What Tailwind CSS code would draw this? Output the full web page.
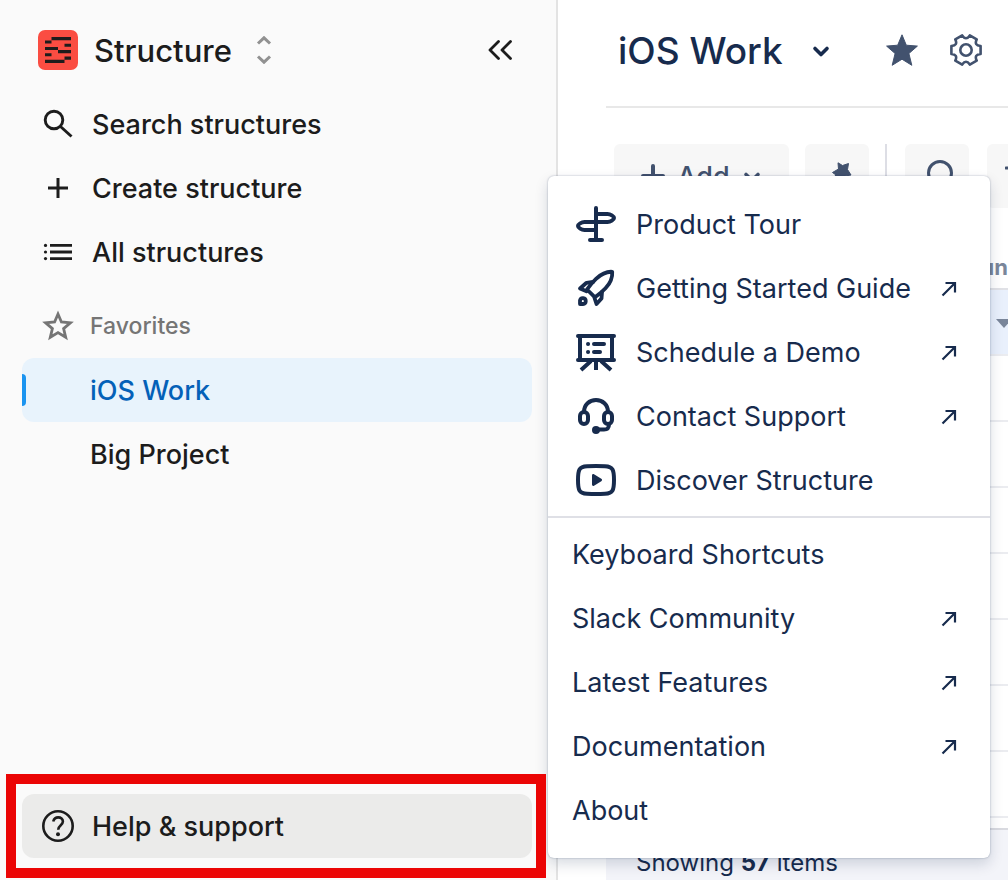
<!DOCTYPE html>
<html lang="en">
<head>
<meta charset="utf-8">
<meta name="viewport" content="width=device-width, initial-scale=1">
<title>Structure</title>
<script src="https://cdn.jsdelivr.net/npm/@tailwindcss/browser@4"></script>
</head>
<body class="relative flex h-screen overflow-hidden bg-white font-['Inter','Liberation_Sans',sans-serif] text-[27px] leading-[33px] text-[#172b4d]">

<!-- Sidebar -->
<aside class="flex w-[558px] shrink-0 flex-col border-r-2 border-[#e3e3e3] bg-[#fafafa] pr-6 pb-[22px] pl-[22px] font-medium text-[#1c1c1c]">
  <header class="flex h-[92px] items-center px-4 pt-2">
    <svg class="size-10 shrink-0" viewBox="0 0 40 40" aria-hidden="true">
      <rect width="40" height="40" rx="7" fill="#fa4d42"/>
      <path fill="#1f1c1c" d="M13.500 7h19.500v3.200H13.500zM7 10.500h6.500v3H7zM26.500 13.700H33v3h-6.500zM7 17h13v3H7zM20 20h13v3.200H20zM7 23.200h6.500v3H7zM26.500 26.400H33v3.300h-6.500zM7 29.700h19.500V33H7z"/>
    </svg>
    <button type="button" class="ml-4 flex items-center gap-6 text-[31px] leading-[41px]">
      Structure
      <svg class="h-7 w-4" viewBox="0 0 16 28" fill="none" stroke="#919191" stroke-width="3" aria-hidden="true"><path d="M2 7.500 8 1.800l6 5.700M2 20.500l6 5.700 6-5.700"/></svg>
    </button>
    <button type="button" aria-label="Collapse sidebar" class="ml-auto mr-[2px]">
      <svg class="h-6 w-7" viewBox="0 0 28 24" fill="none" stroke="#1c1c1c" stroke-width="2.800" stroke-linecap="round" stroke-linejoin="round" aria-hidden="true"><path d="M12.500 3.500 4 12l8.500 8.500M24.500 3.500 16 12l8.500 8.500"/></svg>
    </button>
  </header>

  <nav aria-label="Structures" class="flex flex-col">
    <a href="#search" class="flex h-16 items-center gap-[18px] rounded-xl px-5">
      <svg class="size-8" viewBox="0 0 32 32" fill="none" stroke="#1c1c1c" stroke-width="2.900" aria-hidden="true"><circle cx="12" cy="12" r="8.800"/><path d="M18.500 18.500 29.500 28.500"/></svg>
      Search structures
    </a>
    <a href="#create" class="flex h-16 items-center gap-[18px] rounded-xl px-5">
      <svg class="size-8" viewBox="0 0 32 32" fill="none" stroke="#1c1c1c" stroke-width="3" aria-hidden="true"><path d="M16 6v20M6 16h20"/></svg>
      Create structure
    </a>
    <a href="#all" class="flex h-16 items-center gap-[18px] rounded-xl px-5">
      <svg class="size-8" viewBox="0 0 32 32" fill="#1c1c1c" aria-hidden="true"><path d="M8 8h22v2.800H8zM8 14.600h22v2.800H8zM8 21.200h22V24H8z"/><circle cx="3.500" cy="9.400" r="1.600"/><circle cx="3.500" cy="16" r="1.600"/><circle cx="3.500" cy="22.600" r="1.600"/></svg>
      All structures
    </a>
    <h2 class="mt-[10px] flex h-16 items-center gap-4 px-5 text-[23px] text-[#757575]">
      <svg class="size-8" viewBox="0 0 32 32" fill="none" stroke="#757575" stroke-width="2.800" aria-hidden="true"><path d="m16 4 3.400 8 9 .8-6.800 5.800 2.100 8.700L16 22.600l-7.700 4.700 2.100-8.700-6.800-5.800 9-.8z"/></svg>
      Favorites
    </h2>
    <a href="#ios" aria-current="page" class="flex h-16 items-center rounded-xl bg-[#e8f3fc] text-[#0461b8]">
      <span class="mr-16 h-8 w-1 rounded-r bg-[#1a94f0]"></span>iOS Work
    </a>
    <a href="#big" class="flex h-16 items-center rounded-xl px-[68px]">Big Project</a>
  </nav>

  <button type="button" aria-expanded="true" class="mt-auto flex h-16 items-center gap-[18px] rounded-xl bg-[#ebebea] px-5">
    <svg class="size-8" viewBox="0 0 32 32" fill="none" stroke="#1c1c1c" stroke-width="2.600" aria-hidden="true"><circle cx="16" cy="16" r="14.700"/><path d="M11.200 11.500C12 8.800 13.800 7.400 16.200 7.400c2.700 0 4.700 1.700 4.700 4.200 0 3.600-4.700 3.700-4.700 8.200"/><circle cx="16" cy="24.300" r="2" fill="#1c1c1c" stroke="none"/></svg>
    Help &amp; support
  </button>
</aside>

<!-- Structure view -->
<main class="flex min-w-0 flex-1 flex-col pl-12">
  <header class="flex h-[108px] shrink-0 items-center border-b-2 border-[#e8e8e8] pr-6 pb-1.5 pl-3">
    <h1 class="text-[37px] leading-[49px] font-medium">iOS Work</h1>
    <button type="button" aria-label="Switch structure" class="ml-7">
      <svg class="h-5 w-5" viewBox="0 0 20 20" fill="none" stroke="#172b4d" stroke-width="3.600" stroke-linecap="round" stroke-linejoin="round" aria-hidden="true"><path d="m4 8.500 6 6 6-6"/></svg>
    </button>
    <button type="button" aria-label="Favorite" class="ml-auto">
      <svg class="size-8" viewBox="0 0 32 32" fill="#42526e" stroke="#42526e" stroke-width="1" stroke-linejoin="round" aria-hidden="true"><path d="m16 .8 4.300 10.400 11.100.9-8.500 7.400 2.900 11.800L16 25.200l-9.800 6.100 2.900-11.800L.6 12.100l11.100-.9z"/></svg>
    </button>
    <button type="button" aria-label="Settings" class="ml-8 mr-[2px]">
      <svg class="size-8" viewBox="0 0 32 32" fill="none" stroke="#42526e" stroke-width="2.600" stroke-linejoin="round" aria-hidden="true"><circle cx="16" cy="16" r="5.700"/><path d="M30.600 12v8Q23.800 20.500 26.700 26.600L19.800 30.600Q16 25 12.200 30.600L5.300 26.600Q8.200 20.500 1.400 20v-8Q8.200 11.500 5.300 5.400L12.200 1.400Q16 7 19.800 1.400L26.700 5.400Q23.800 11.500 30.600 12z"/></svg>
    </button>
  </header>

  <div class="mt-9 flex h-16 shrink-0 overflow-hidden pl-2 text-[#42526e]">
    <button type="button" class="flex w-[175px] shrink-0 items-center justify-center gap-3 rounded-md bg-[#f7f7f7] font-medium">
      <svg class="size-6" viewBox="0 0 24 24" fill="none" stroke="#42526e" stroke-width="4" stroke-linecap="round" aria-hidden="true"><path d="M12 2v20M2 12h20"/></svg>
      Add
      <svg class="size-5" viewBox="0 0 20 20" fill="none" stroke="#42526e" stroke-width="3.600" stroke-linecap="round" aria-hidden="true"><path d="m4 8.500 6 6 6-6"/></svg>
    </button>
    <button type="button" aria-label="Automation" class="ml-4 flex w-16 shrink-0 items-center justify-center rounded-md bg-[#f7f7f7]">
      <svg class="size-8" viewBox="0 0 32 32" fill="#42526e" stroke="#42526e" stroke-linejoin="round" aria-hidden="true"><path d="m17 2.800 4.500 2.700L27.500 3.500l-1 6L30 15l-6 1L6 31l-4-4 13-12-3.500-2.500L17.500 9z"/></svg>
    </button>
    <span class="ml-4 w-[2px] shrink-0 bg-[#dddee5]"></span>
    <button type="button" aria-label="Search" class="ml-[18px] flex w-16 shrink-0 items-center justify-center rounded-md bg-[#f7f7f7]">
      <svg class="size-8" viewBox="0 0 32 32" fill="none" stroke="#42526e" stroke-width="3" stroke-linecap="round" aria-hidden="true"><circle cx="19" cy="13" r="11.500"/><path d="m10.500 21.500-8 8"/></svg>
    </button>
    <button type="button" aria-label="Filter" class="ml-[18px] flex w-16 shrink-0 items-center justify-center rounded-md bg-[#f7f7f7]">
      <svg class="h-8 w-7" viewBox="0 0 28 32" fill="none" stroke="#42526e" stroke-width="3" stroke-linecap="round" aria-hidden="true"><path d="M1 8h26M6 16h16M11 24h6"/></svg>
    </button>
  </div>

  <div class="mt-9 min-h-0 flex-1 overflow-hidden">
    <table class="w-full table-fixed border-collapse">
      <thead>
        <tr class="h-[45px] border-b-2 border-[#e0e1e6]">
          <th class="pl-8"></th>
          <th class="w-7 pt-0.5 text-right align-middle text-[22px] leading-6 font-bold text-[#7a869a]">un</th>
        </tr>
      </thead>
      <tbody>
        <tr class="h-[66px] border-b-2 border-[#ebecf0] bg-[#e9f0fc]"><td></td><td class="pl-4"><svg class="h-3 w-3 overflow-visible" viewBox="0 0 12 12" fill="#7a869a" aria-hidden="true"><path d="M0 3h16L8 12z"/></svg></td></tr>
        <tr class="h-[66px] border-b-2 border-[#ebecf0]"><td></td><td></td></tr>
        <tr class="h-[66px] border-b-2 border-[#ebecf0]"><td></td><td></td></tr>
        <tr class="h-[66px] border-b-2 border-[#ebecf0]"><td></td><td></td></tr>
        <tr class="h-[66px] border-b-2 border-[#ebecf0]"><td></td><td></td></tr>
        <tr class="h-[66px] border-b-2 border-[#ebecf0]"><td></td><td></td></tr>
        <tr class="h-[66px] border-b-2 border-[#ebecf0]"><td></td><td></td></tr>
        <tr class="h-[66px] border-b-2 border-[#ebecf0]"><td></td><td></td></tr>
      </tbody>
    </table>
  </div>

  <footer class="flex h-[52px] shrink-0 items-center border-t-2 border-[#d9dae0] bg-[#f3f4f9] pt-4 pl-[30px] text-2xl">
    <p>Showing <b>57</b> items</p>
  </footer>
</main>

<!-- Help menu -->
<div role="menu" aria-label="Help &amp; support" class="absolute bottom-[22px] left-[548px] w-[442px] rounded-md bg-white pb-4 shadow-[0_0_2px_rgba(9,30,66,0.35),0_6px_14px_rgba(9,30,66,0.16)]">
  <div class="border-b-2 border-[#dfe0e6] pt-4 pb-1">
    <a role="menuitem" href="#tour" class="flex h-16 items-center gap-5 pr-8 pl-7">
      <svg class="size-10" viewBox="0 0 40 40" fill="none" stroke="#172b4d" stroke-width="4" stroke-linecap="round" stroke-linejoin="round" aria-hidden="true"><path d="M20 4v32M14 36h12M20 10h11.500c3 0 6.500 2.200 6.500 4s-3.500 4-6.500 4h-23C5.500 18 2 20.200 2 22s3.500 4 6.500 4H20"/></svg>
      Product Tour
    </a>
    <a role="menuitem" href="#guide" class="flex h-16 items-center gap-5 pr-8 pl-7">
      <svg class="size-10 shrink-0" viewBox="0 0 40 40" fill="none" stroke="#172b4d" stroke-width="3.800" stroke-linecap="round" stroke-linejoin="round" aria-hidden="true"><path d="M36.200 3.800c.4 5-1.600 11-6.700 16.500-3 3.200-7 6.500-10.500 9L11 21.500c2.300-3.500 5.600-7.500 9-10.700 5.500-5 11.200-7.400 16.200-7z"/><path d="m17 14-6.500.8L4 20.500l6.500 2.800M26 24l-.5 6.500-5 5.500-2-6"/><path d="M4 36v-3.500a2.900 2.900 0 1 1 3 3.500z"/></svg>
      Getting Started Guide
      <svg class="ml-auto size-5 shrink-0" viewBox="0 0 20 20" fill="none" stroke="#172b4d" stroke-width="2.200" aria-hidden="true"><path d="M4.500 17.500 17 5M7.500 5H17v9.500"/></svg>
    </a>
    <a role="menuitem" href="#demo" class="flex h-16 items-center gap-5 pr-8 pl-7">
      <svg class="size-10" viewBox="0 0 40 40" fill="none" stroke="#172b4d" stroke-width="4" aria-hidden="true"><path stroke-linecap="round" d="M2 4h36M2 28h36"/><path d="M4 4v24M36 4v24M20 28v10M15 29 5 38M25 29l10 9"/><path stroke-linecap="round" d="M18 12h10M18 20h6M12 12h.1M12 20h.1"/></svg>
      Schedule a Demo
      <svg class="ml-auto size-5" viewBox="0 0 20 20" fill="none" stroke="#172b4d" stroke-width="2.200" aria-hidden="true"><path d="M4.500 17.500 17 5M7.500 5H17v9.500"/></svg>
    </a>
    <a role="menuitem" href="#contact" class="flex h-16 items-center gap-5 pr-8 pl-7">
      <svg class="size-10" viewBox="0 0 40 40" fill="none" stroke="#172b4d" stroke-width="4" stroke-linecap="round" aria-hidden="true"><path d="M8 16C8 8.500 13.500 4 20 4s12 4.500 12 12"/><rect x="4" y="16" width="8" height="12" rx="4"/><rect x="28" y="16" width="8" height="12" rx="4"/><path d="M33 28c0 4-1.500 5.500-5 5.500h-8"/><circle cx="20" cy="34" r="4" fill="#172b4d" stroke="none"/></svg>
      Contact Support
      <svg class="ml-auto size-5" viewBox="0 0 20 20" fill="none" stroke="#172b4d" stroke-width="2.200" aria-hidden="true"><path d="M4.500 17.500 17 5M7.500 5H17v9.500"/></svg>
    </a>
    <a role="menuitem" href="#discover" class="flex h-16 items-center gap-5 pr-8 pl-7">
      <svg class="size-10" viewBox="0 0 40 40" fill="none" stroke="#172b4d" stroke-width="4" aria-hidden="true"><path d="M2 20c0-10 1-13.500 9-13.800a180 180 0 0 1 18 0C37 6.500 38 10 38 20s-1 13.500-9 13.800a180 180 0 0 1-18 0C3 33.500 2 30 2 20z"/><path fill="#172b4d" stroke="none" d="M16 15.500c0-1.200 1-1.800 2-1.200l7.300 4.500c1 .6 1 1.800 0 2.400L18 25.700c-1 .6-2 0-2-1.200z"/></svg>
      Discover Structure
    </a>
  </div>
  <div class="pt-1">
    <a role="menuitem" href="#keys" class="flex h-16 items-center pr-8 pl-6">Keyboard Shortcuts</a>
    <a role="menuitem" href="#slack" class="flex h-16 items-center pr-8 pl-6">
      Slack Community
      <svg class="ml-auto size-5" viewBox="0 0 20 20" fill="none" stroke="#172b4d" stroke-width="2.200" aria-hidden="true"><path d="M4.500 17.500 17 5M7.500 5H17v9.500"/></svg>
    </a>
    <a role="menuitem" href="#features" class="flex h-16 items-center pr-8 pl-6">
      Latest Features
      <svg class="ml-auto size-5" viewBox="0 0 20 20" fill="none" stroke="#172b4d" stroke-width="2.200" aria-hidden="true"><path d="M4.500 17.500 17 5M7.500 5H17v9.500"/></svg>
    </a>
    <a role="menuitem" href="#docs" class="flex h-16 items-center pr-8 pl-6">
      Documentation
      <svg class="ml-auto size-5" viewBox="0 0 20 20" fill="none" stroke="#172b4d" stroke-width="2.200" aria-hidden="true"><path d="M4.500 17.500 17 5M7.500 5H17v9.500"/></svg>
    </a>
    <a role="menuitem" href="#about" class="flex h-16 items-center pr-8 pl-6">About</a>
  </div>
</div>

<!-- Highlight around the help button -->
<div class="pointer-events-none absolute bottom-[2px] left-[6px] h-[104px] w-[540px] border-[10px] border-[#eb0505]"></div>
</body>
</html>
